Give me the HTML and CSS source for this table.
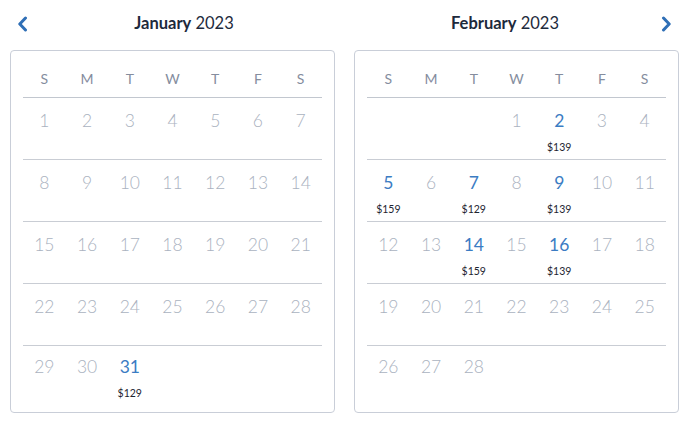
FILE: index.html
```html
<!DOCTYPE html>
<html>
<head>
<meta charset="utf-8">
<link rel="stylesheet" href="styles.css">
</head>
<body>
<div class="wrap">
  <section class="month">
    <header class="month-head head-prev">
      <button class="nav" aria-label="Previous month">
        <svg width="11" height="16" viewBox="0 0 11 16"><path d="M8.5 2 L2.8 8 L8.5 14" fill="none" stroke="#2f6fb6" stroke-width="3" stroke-linecap="round" stroke-linejoin="round"/></svg>
      </button>
      <h2 class="title"><b>January</b> 2023</h2>
    </header>
    <div class="cal">
      <div class="dow"><span>S</span><span>M</span><span>T</span><span>W</span><span>T</span><span>F</span><span>S</span></div>
      <div class="week"><div class="day"><span class="n">1</span></div><div class="day"><span class="n">2</span></div><div class="day"><span class="n">3</span></div><div class="day"><span class="n">4</span></div><div class="day"><span class="n">5</span></div><div class="day"><span class="n">6</span></div><div class="day"><span class="n">7</span></div></div>
      <div class="week"><div class="day"><span class="n">8</span></div><div class="day"><span class="n">9</span></div><div class="day"><span class="n">10</span></div><div class="day"><span class="n">11</span></div><div class="day"><span class="n">12</span></div><div class="day"><span class="n">13</span></div><div class="day"><span class="n">14</span></div></div>
      <div class="week"><div class="day"><span class="n">15</span></div><div class="day"><span class="n">16</span></div><div class="day"><span class="n">17</span></div><div class="day"><span class="n">18</span></div><div class="day"><span class="n">19</span></div><div class="day"><span class="n">20</span></div><div class="day"><span class="n">21</span></div></div>
      <div class="week"><div class="day"><span class="n">22</span></div><div class="day"><span class="n">23</span></div><div class="day"><span class="n">24</span></div><div class="day"><span class="n">25</span></div><div class="day"><span class="n">26</span></div><div class="day"><span class="n">27</span></div><div class="day"><span class="n">28</span></div></div>
      <div class="week last"><div class="day"><span class="n">29</span></div><div class="day"><span class="n">30</span></div><div class="day avail"><span class="n">31</span><span class="price">$129</span></div><div class="day"></div><div class="day"></div><div class="day"></div><div class="day"></div></div>
    </div>
  </section>
  <section class="month">
    <header class="month-head head-next">
      <h2 class="title"><b>February</b> 2023</h2>
      <button class="nav" aria-label="Next month">
        <svg width="11" height="16" viewBox="0 0 11 16"><path d="M2.5 2 L8.2 8 L2.5 14" fill="none" stroke="#2f6fb6" stroke-width="3" stroke-linecap="round" stroke-linejoin="round"/></svg>
      </button>
    </header>
    <div class="cal">
      <div class="dow"><span>S</span><span>M</span><span>T</span><span>W</span><span>T</span><span>F</span><span>S</span></div>
      <div class="week"><div class="day"></div><div class="day"></div><div class="day"></div><div class="day"><span class="n">1</span></div><div class="day avail"><span class="n">2</span><span class="price">$139</span></div><div class="day"><span class="n">3</span></div><div class="day"><span class="n">4</span></div></div>
      <div class="week"><div class="day avail"><span class="n">5</span><span class="price">$159</span></div><div class="day"><span class="n">6</span></div><div class="day avail"><span class="n">7</span><span class="price">$129</span></div><div class="day"><span class="n">8</span></div><div class="day avail"><span class="n">9</span><span class="price">$139</span></div><div class="day"><span class="n">10</span></div><div class="day"><span class="n">11</span></div></div>
      <div class="week"><div class="day"><span class="n">12</span></div><div class="day"><span class="n">13</span></div><div class="day avail"><span class="n">14</span><span class="price">$159</span></div><div class="day"><span class="n">15</span></div><div class="day avail"><span class="n">16</span><span class="price">$139</span></div><div class="day"><span class="n">17</span></div><div class="day"><span class="n">18</span></div></div>
      <div class="week"><div class="day"><span class="n">19</span></div><div class="day"><span class="n">20</span></div><div class="day"><span class="n">21</span></div><div class="day"><span class="n">22</span></div><div class="day"><span class="n">23</span></div><div class="day"><span class="n">24</span></div><div class="day"><span class="n">25</span></div></div>
      <div class="week last"><div class="day"><span class="n">26</span></div><div class="day"><span class="n">27</span></div><div class="day"><span class="n">28</span></div><div class="day"></div><div class="day"></div><div class="day"></div><div class="day"></div></div>
    </div>
  </section>
</div>
</body>
</html>
```

FILE: styles.css
```css
* { box-sizing: border-box; }
html, body { margin: 0; padding: 0; background: #fff; }
body {
  font-family: "Lato", "Open Sans", sans-serif;
  color: #1d2a3c;
}
.wrap {
  display: grid;
  grid-template-columns: 325px 325px;
  column-gap: 19px;
  padding: 0 21px 0 10px;
}
.month { display: flex; flex-direction: column; }
.month-head {
  height: 50px;
  display: grid;
  align-items: center;
  padding: 0 0 5px 0;
}
.head-prev { grid-template-columns: 23px 1fr; }
.head-next { grid-template-columns: 1fr 23px; }
.title {
  margin: 0;
  font-size: 16.5px;
  font-weight: 400;
  color: #1d2a3c;
  text-align: center;
}
.title b { font-weight: 700; }
.nav {
  border: 0;
  background: none;
  padding: 0;
  width: 11px;
  height: 16px;
  display: flex;
  cursor: pointer;
  margin-top: 2px;
}
.head-prev .nav { justify-self: start; margin-left: 7px; }
.head-next .nav { justify-self: start; margin-left: 5px; }
.cal {
  border: 1px solid #c9ced8;
  border-radius: 4px;
  padding: 0 12px;
}
.dow {
  display: grid;
  grid-template-columns: repeat(7, 1fr);
  height: 47px;
  align-items: center;
  padding-top: 8px;
  border-bottom: 1px solid #c2c7cf;
  font-size: 14px;
  color: #858d9e;
  text-align: center;
}
.week {
  display: grid;
  grid-template-columns: repeat(7, 1fr);
  height: 62px;
  border-bottom: 1px solid #c9cdd4;
}
.week.last { border-bottom: 0; height: 66px; }
.day {
  display: flex;
  flex-direction: column;
  align-items: center;
  padding-top: 12px;
}
.week.last .day { padding-top: 10px; }
.n {
  font-size: 17.5px;
  line-height: 22px;
  font-weight: 300;
  color: #aab2c0;
}
.avail .n { color: #3b7cc3; font-weight: 400; }
.price {
  margin-top: 8px;
  font-size: 10.5px;
  line-height: 14px;
  color: #1d2430;
}
```
